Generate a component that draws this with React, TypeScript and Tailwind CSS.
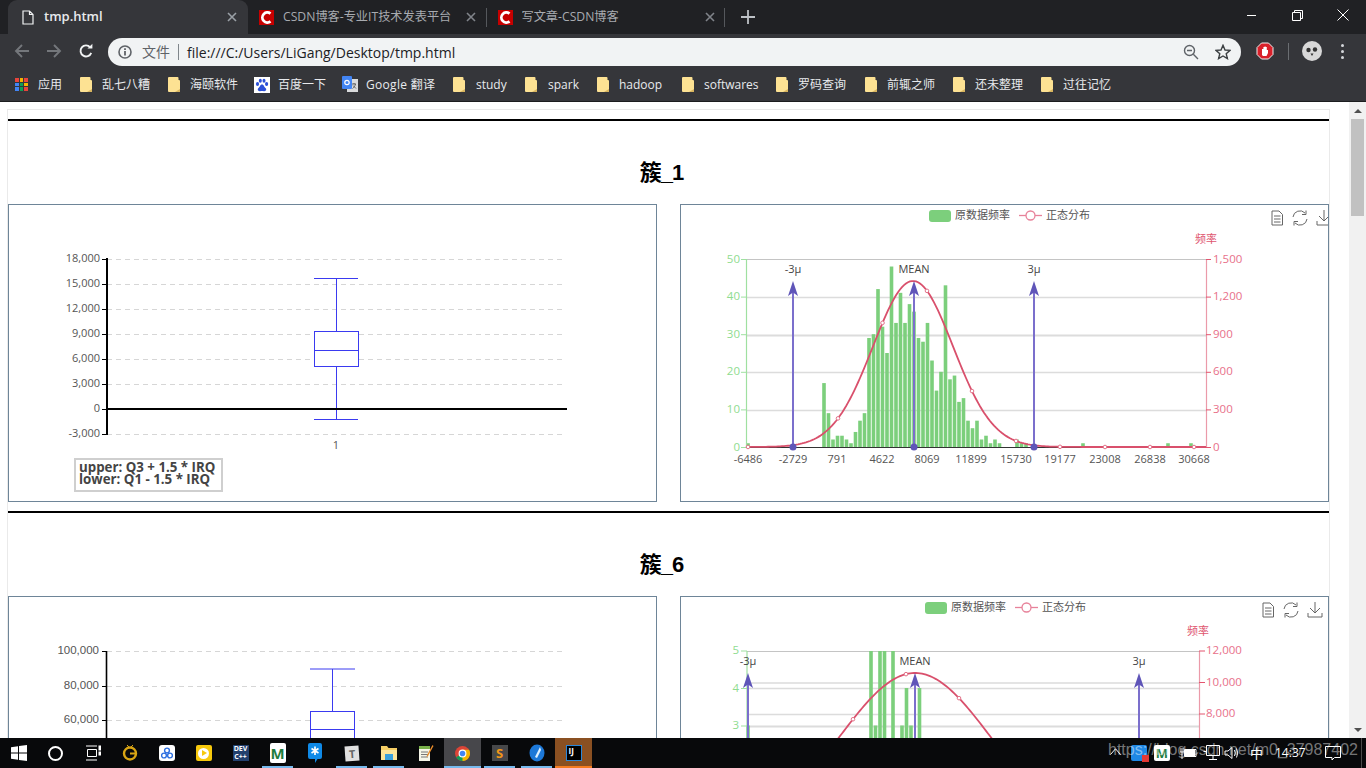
import React from "react";

const UI = "font-['Open_Sans','Noto_Sans_CJK_SC',sans-serif]";

function Cs() {
  return (
    <svg width="15" height="15" viewBox="0 0 15 15" className="flex-none">
      <rect width="15" height="15" fill="#c60000" />
      <path d="M11.5 3.6 A5 5 0 1 0 11.5 11.4" fill="none" stroke="#fff" strokeWidth="2.8" />
    </svg>
  );
}

function X({ c = "#9aa0a6" }: { c?: string }) {
  return (
    <svg width="10" height="10" viewBox="0 0 10 10" className="flex-none">
      <path d="M1 1 L9 9 M9 1 L1 9" stroke={c} strokeWidth="1.6" />
    </svg>
  );
}

function Tab({ title }: { title: string }) {
  return (
    <div className="w-[238.5px] h-[34px] flex items-center flex-none relative">
      <div className="ml-[11px] mr-[9px]"><Cs /></div>
      <span className="text-[12.2px] text-[#a8abb0] w-[183px] truncate whitespace-nowrap">{title}</span>
      <X c="#80848a" />
      <div className="absolute right-0 top-[8px] w-px h-[19px] bg-[#55585c]" />
    </div>
  );
}

function TopBar() {
  return (
    <div className="h-[34px] bg-[#202124] flex items-end flex-none relative pl-[8px]">
      <div className="w-[240px] h-[34px] bg-[#35363a] rounded-t-[9px] flex items-center flex-none">
        <svg width="12" height="15" viewBox="0 0 12 15" className="ml-[14px] mr-[10px]">
          <path d="M1 1 H7.5 L11 4.5 V14 H1 Z M7.5 1 V4.5 H11" fill="none" stroke="#f1f3f4" strokeWidth="1.2" />
        </svg>
        <span className="text-[13px] font-semibold text-[#e8eaed] w-[183px]">tmp.html</span>
        <X />
      </div>
      <Tab title="CSDN博客-专业IT技术发表平台" />
      <Tab title="写文章-CSDN博客" />
      <svg width="14" height="14" viewBox="0 0 14 14" className="ml-[16px] mb-[10px] flex-none">
        <path d="M7 0 V14 M0 7 H14" stroke="#bdc1c6" strokeWidth="1.8" />
      </svg>
      <div className="absolute right-0 top-0 h-[34px] flex items-center">
        <div className="w-[46px] flex justify-center"><div className="w-[9px] h-px bg-white mb-[4px]" /></div>
        <div className="w-[46px] flex justify-center">
          <svg width="11" height="11" viewBox="0 0 11 11" className="mb-[4px]">
            <path d="M0.5 2.5 H8.5 V10.5 H0.5 Z M2.5 2.5 V0.5 H10.5 V8.5 H8.5" fill="none" stroke="#fff" />
          </svg>
        </div>
        <div className="w-[46px] flex justify-center">
          <svg width="12" height="12" viewBox="0 0 12 12" className="mb-[4px]">
            <path d="M0.5 0.5 L11.5 11.5 M11.5 0.5 L0.5 11.5" stroke="#fff" />
          </svg>
        </div>
      </div>
    </div>
  );
}

function ToolBar() {
  return (
    <div className="h-[34px] bg-[#35363a] flex items-center flex-none pl-[14px]">
      <svg width="16" height="16" viewBox="0 0 16 16" className="flex-none">
        <path d="M15 8 H2 M8 2 L2 8 L8 14" fill="none" stroke="#74777b" strokeWidth="1.9" />
      </svg>
      <svg width="16" height="16" viewBox="0 0 16 16" className="ml-[16px] flex-none">
        <path d="M1 8 H14 M8 2 L14 8 L8 14" fill="none" stroke="#74777b" strokeWidth="1.9" />
      </svg>
      <svg width="16" height="16" viewBox="0 0 16 16" className="ml-[16px] flex-none">
        <path d="M13.2 9.8 A5.5 5.5 0 1 1 12.2 4.3" fill="none" stroke="#f1f3f4" strokeWidth="1.9" />
        <path d="M9.5 5.6 H14.4 V0.8 Z" fill="#f1f3f4" />
      </svg>
      <div className="ml-[14px] w-[1133px] h-[28px] rounded-full bg-[#f1f3f4] flex items-center flex-none mt-[2px]">
        <svg width="14" height="14" viewBox="0 0 14 14" className="ml-[10px] flex-none">
          <circle cx="7" cy="7" r="6" fill="none" stroke="#5f6368" strokeWidth="1.6" />
          <path d="M7 6 V10.5 M7 3.2 V5" stroke="#5f6368" strokeWidth="1.8" />
        </svg>
        <span className="ml-[10px] text-[14px] leading-none text-[#5f6368] whitespace-nowrap">文件</span>
        <div className="w-px h-[16px] bg-[#80868b] ml-[8px]" />
        <span className="ml-[8px] text-[14px] text-[#202124] whitespace-nowrap">file:///C:/Users/LiGang/Desktop/tmp.html</span>
        <svg width="16" height="16" viewBox="0 0 16 16" className="ml-auto flex-none">
          <circle cx="6.5" cy="6.5" r="5" fill="none" stroke="#5f6368" strokeWidth="1.4" />
          <path d="M10.3 10.3 L15 15 M4 6.5 H9" stroke="#5f6368" strokeWidth="1.4" />
        </svg>
        <svg width="16" height="16" viewBox="0 0 16 16" className="ml-[16px] mr-[10px] flex-none">
          <path d="M8 1.3 L10 6 L15 6.4 L11.2 9.7 L12.4 14.6 L8 12 L3.6 14.6 L4.8 9.7 L1 6.4 L6 6 Z" fill="none" stroke="#3c4043" strokeWidth="1.4" />
        </svg>
      </div>
      <svg width="18" height="18" viewBox="0 0 18 18" className="ml-[15px] flex-none">
        <path d="M5.5 1 H12.5 L17 5.5 V12.5 L12.5 17 H5.5 L1 12.5 V5.5 Z" fill="#d8202a" stroke="#eee" />
        <path d="M6 13 V7 H7.4 V5 H8.5 V7 V4.5 H9.7 V7 V5 H10.8 V8 H12 V11 L10.5 14 H7 Z" fill="#fff" />
      </svg>
      <div className="w-px h-[17px] bg-[#6b6e72] ml-[14px] flex-none" />
      <div className="w-[20px] h-[20px] rounded-full bg-[#d8d8d8] ml-[13px] flex-none flex items-center justify-center">
        <svg width="20" height="20" viewBox="0 0 20 20">
          <circle cx="6.5" cy="9" r="2.2" fill="#333" />
          <circle cx="13" cy="8.5" r="2.2" fill="#333" />
          <path d="M10 15 L8.5 12.5 H11.5 Z" fill="#333" />
        </svg>
      </div>
      <div className="ml-[19px] flex flex-col gap-[3px] flex-none">
        <div className="w-[3px] h-[3px] rounded-full bg-[#d5d7da]" />
        <div className="w-[3px] h-[3px] rounded-full bg-[#d5d7da]" />
        <div className="w-[3px] h-[3px] rounded-full bg-[#d5d7da]" />
      </div>
    </div>
  );
}

function Folder() {
  return (
    <svg width="12" height="15" viewBox="0 0 12 15" className="flex-none">
      <path d="M0 1 Q0 0 1 0 H9.5 Q10.5 0 10.5 1 V3 H11 Q12 3 12 4 V14 Q12 15 11 15 H1 Q0 15 0 14 Z" fill="#fde293" />
      <path d="M7 15 L12 12 V15 Z" fill="#d8b55f" />
    </svg>
  );
}

function Apps() {
  const cs = ["#e8453c", "#f4b400", "#e8453c", "#4285f4", "#0f9d58", "#f4b400", "#4285f4", "#0f9d58", "#e8453c"];
  return (
    <div className="grid grid-cols-3 gap-[1px] w-[13px] flex-none">
      {cs.map((c, i) => (
        <div key={i} className="w-[3.6px] h-[3.6px]" style={{ background: c }} />
      ))}
    </div>
  );
}

function Baidu() {
  return (
    <svg width="16" height="16" viewBox="0 0 16 16" className="flex-none">
      <rect width="16" height="16" fill="#fff" />
      <g fill="#2b50d8">
        <ellipse cx="3.5" cy="7" rx="1.6" ry="2" />
        <ellipse cx="6.3" cy="3.8" rx="1.5" ry="2" />
        <ellipse cx="10" cy="3.8" rx="1.5" ry="2" />
        <ellipse cx="12.6" cy="7" rx="1.6" ry="2" />
        <path d="M8 7.5 C6 7.5 6 10 4.5 11 C3 12 4 14.5 6 14.2 C7.5 14 8.5 14 10 14.2 C12 14.5 13 12 11.5 11 C10 10 10 7.5 8 7.5 Z" />
      </g>
    </svg>
  );
}

function Translate() {
  return (
    <svg width="16" height="17" viewBox="0 0 16 17" className="flex-none">
      <rect x="5" y="3" width="11" height="13" fill="#d9dadb" />
      <rect width="10" height="13" rx="1" fill="#4285f4" />
      <circle cx="5" cy="6.5" r="2.2" fill="none" stroke="#fff" strokeWidth="1.2" />
      <path d="M10 8 L14 8 M12 7 V8 M13.5 8 C13 10 12 11.5 10.5 12.5 M11 9.5 L14 12.5" stroke="#555" strokeWidth="0.9" fill="none" />
    </svg>
  );
}

type Bm = { k: "a" | "f" | "b" | "t"; t: string; w: string; ts?: string };
const bms: Bm[] = [
  { k: "a", t: "应用", w: "w-[65px]", ts: "ml-[10px]" },
  { k: "f", t: "乱七八糟", w: "w-[88px]", ts: "ml-[10px]" },
  { k: "f", t: "海颐软件", w: "w-[86px]", ts: "ml-[10px]" },
  { k: "b", t: "百度一下", w: "w-[88px]", ts: "ml-[8px]" },
  { k: "t", t: "Google 翻译", w: "w-[111px]", ts: "ml-[8px] tracking-[0.3px]" },
  { k: "f", t: "study", w: "w-[72px]", ts: "ml-[11px]" },
  { k: "f", t: "spark", w: "w-[72px]", ts: "ml-[11px]" },
  { k: "f", t: "hadoop", w: "w-[85px]", ts: "ml-[10px]" },
  { k: "f", t: "softwares", w: "w-[94px]", ts: "ml-[10px]" },
  { k: "f", t: "罗码查询", w: "w-[89px]", ts: "ml-[10px]" },
  { k: "f", t: "前辄之师", w: "w-[88px]", ts: "ml-[10px]" },
  { k: "f", t: "还未整理", w: "w-[88px]", ts: "ml-[10px]" },
  { k: "f", t: "过往记忆", w: "w-[88px]", ts: "ml-[10px]" },
];

function Bookmarks() {
  return (
    <div className="h-[34px] bg-[#35363a] border-b border-[#1c1d1f] flex items-center flex-none pl-[15px]">
      {bms.map((b) => (
        <div key={b.t} className={"flex items-center flex-none " + b.w}>
          {b.k === "a" && <Apps />}
          {b.k === "f" && <Folder />}
          {b.k === "b" && <Baidu />}
          {b.k === "t" && <Translate />}
          <span className={"text-[12px] text-[#e8eaed] whitespace-nowrap " + b.ts}>{b.t}</span>
        </div>
      ))}
    </div>
  );
}

const bars1: [number, number][] = [
  [748, 1], [824, 17], [828.5, 9], [833, 2], [837.5, 3], [842, 3], [846.5, 2], [851, 1], [855.5, 4], [860, 7], [864.5, 9],
  [869, 29], [873.5, 30], [878, 42], [882.5, 32], [887, 25], [891.5, 48], [896, 33], [900.5, 41], [905, 33], [909.5, 38], [914, 36],
  [918.5, 29], [923, 28], [927.5, 33], [932, 23], [936.5, 15], [941, 20], [945.5, 43], [950, 18], [954.5, 19], [959, 12], [963.5, 13],
  [968, 7], [972.5, 5], [977, 7], [981.5, 2], [986, 3], [990.5, 1], [995, 2], [999.5, 1], [1017, 2], [1021.5, 1], [1026, 1], [1083, 1], [1168, 1], [1191, 1],
];
const bars2: [number, number][] = [
  [748, 3], [871, 5], [875.5, 3], [880, 5], [884.5, 5], [893, 5], [902, 3], [906.5, 4], [911, 3], [919.5, 4],
];

function curve(cx: number, sigma: number, base: number, h: number, x0: number, x1: number) {
  let d = "";
  for (let x = x0; x <= x1; x += 2) {
    const y = base - h * Math.exp(-((x - cx) * (x - cx)) / (2 * sigma * sigma));
    d += (d ? " L" : "M") + x + " " + y.toFixed(2);
  }
  return d;
}

function Arrow({ x, base, tip, label, ly, dot }: { x: number; base: number; tip: number; label: string; ly: number; dot?: boolean }) {
  return (
    <g>
      <line x1={x} x2={x} y1={base} y2={tip + 8} stroke="#7b6fcc" strokeWidth="2" />
      <path d={`M${x} ${tip} L${x + 5} ${tip + 15} L${x} ${tip + 11.5} L${x - 5} ${tip + 15} Z`} fill="#5f55b8" />
      {dot && <circle cx={x} cy={base} r="3.5" fill="#5f55b8" />}
      <text x={x} y={ly} textAnchor="middle" fontSize="11" fill="#444">{label}</text>
    </g>
  );
}

function ToolIcons({ xs, y }: { xs: number[]; y: number }) {
  return (
    <g fill="none" stroke="#666" strokeWidth="1">
      <path d={`M${xs[0] - 5} ${y - 7} H${xs[0] + 2} L${xs[0] + 5.5} ${y - 3.5} V${y + 7} H${xs[0] - 5} Z M${xs[0] - 3} ${y - 2} H${xs[0] + 3.5} M${xs[0] - 3} ${y + 1} H${xs[0] + 3.5} M${xs[0] - 3} ${y + 4} H${xs[0] + 3.5}`} />
      <path d={`M${xs[1] - 7} ${y - 1} A7 7 0 0 1 ${xs[1] + 5} ${y - 5} M${xs[1] + 7} ${y + 1} A7 7 0 0 1 ${xs[1] - 5} ${y + 5} M${xs[1] + 6} ${y - 7.5} V${y - 3.5} H${xs[1] + 2} M${xs[1] - 6} ${y + 7.5} V${y + 3.5} H${xs[1] - 2}`} />
      <path d={`M${xs[2]} ${y - 8} V${y + 3} M${xs[2] - 5} ${y - 2} L${xs[2]} ${y + 3} L${xs[2] + 5} ${y - 2} M${xs[2] - 7} ${y + 3} V${y + 7} H${xs[2] + 7} V${y + 3}`} />
    </g>
  );
}

function Chart1() {
  const base = 447;
  return (
    <svg width="647" height="296" viewBox="681 205 647 296" className={"block " + UI}>
      {[297, 335, 372, 410].map((y) => (
        <line key={y} x1="746" x2="1206" y1={y + 0.5} y2={y + 0.5} stroke="#dcdcdc" strokeWidth={y === 335 ? 2 : 1.3} />
      ))}
      <line x1="746" x2="1206" y1="259.5" y2="259.5" stroke="#c4c4c4" />
      {bars1.map(([x, v]) => (
        <rect key={x} x={x - 1.8} y={base - v * 3.76} width="3.6" height={v * 3.76} fill="#7ccf7c" />
      ))}
      <line x1="746.5" x2="746.5" y1="259" y2="447" stroke="#9fe0a0" strokeWidth="1.2" />
      <line x1="1206.5" x2="1206.5" y1="259" y2="447" stroke="#eb9aa9" strokeWidth="1.2" />
      {[50, 40, 30, 20, 10, 0].map((t, i) => (
        <g key={t}>
          <line x1="741" x2="746" y1={259.5 + i * 37.6} y2={259.5 + i * 37.6} stroke="#9fe0a0" />
          <text x="740" y={262.5 + i * 37.6} textAnchor="end" fontSize="11.5" fill="#8fdc90">{t}</text>
        </g>
      ))}
      {["1,500", "1,200", "900", "600", "300", "0"].map((t, i) => (
        <g key={t}>
          <line x1="1206" x2="1211" y1={259.5 + i * 37.6} y2={259.5 + i * 37.6} stroke="#e3556f" />
          <text x="1213" y={262.5 + i * 37.6} fontSize="11.5" fill="#e8708a">{t}</text>
        </g>
      ))}
      <text x="1206" y="243" textAnchor="middle" fontSize="11" fill="#e0566f">频率</text>
      <line x1="746" x2="1206" y1="447.5" y2="447.5" stroke="#333" />
      {[["-6486", 748], ["-2729", 793], ["791", 837], ["4622", 882], ["8069", 927], ["11899", 971], ["15730", 1016], ["19177", 1060], ["23008", 1105], ["26838", 1150], ["30668", 1194]].map(([t, x]) => (
        <text key={t as string} x={x as number} y="463" textAnchor="middle" fontSize="11" fill="#555">{t}</text>
      ))}
      <path d={curve(913, 40, base, 166, 748, 1206)} fill="none" stroke="#d9506c" strokeWidth="1.8" />
      {[748, 838, 882.5, 927, 972, 1016, 1060, 1105, 1150, 1194].map((x) => (
        <circle key={x} cx={x} cy={base - 166 * Math.exp(-((x - 913) * (x - 913)) / 3200)} r="1.8" fill="#fff" stroke="#e3738a" />
      ))}
      <Arrow x={793} base={447} tip={281} label="-3μ" ly={273} dot />
      <Arrow x={914} base={447} tip={281} label="MEAN" ly={273} dot />
      <Arrow x={1034} base={447} tip={281} label="3μ" ly={273} dot />
      <rect x="929" y="210" width="22" height="12" rx="3" fill="#7ccf7c" />
      <text x="955" y="219" fontSize="11" fill="#555">原数据频率</text>
      <line x1="1019" x2="1042" y1="215.5" y2="215.5" stroke="#e7829a" strokeWidth="1.3" />
      <circle cx="1030.5" cy="215.5" r="4.5" fill="#fff" stroke="#e7829a" strokeWidth="1.3" />
      <text x="1046" y="219" fontSize="11" fill="#555">正态分布</text>
      <ToolIcons xs={[1277, 1300, 1324]} y={218} />
    </svg>
  );
}

function Chart2() {
  const base = 840;
  return (
    <svg width="647" height="296" viewBox="681 597 647 296" className={"block " + UI}>
      {[688, 714, 726, 745].map((y) => (
        <line key={y} x1="747" x2="1199" y1={y + 0.5} y2={y + 0.5} stroke="#dcdcdc" strokeWidth={y === 726 ? 2 : 1.3} />
      ))}
      <line x1="747" x2="1199" y1="683" y2="683" stroke="#e4e4e4" strokeWidth="2" />
      <line x1="747" x2="1199" y1="651.5" y2="651.5" stroke="#c4c4c4" />
      {bars2.map(([x, v]) => (
        <rect key={x} x={x - 1.8} y={Math.max(651, 838 - v * 37.5)} width="3.6" height="220" fill="#7ccf7c" />
      ))}
      <line x1="747" x2="747" y1="651" y2="840" stroke="#9fe0a0" strokeWidth="1.2" />
      <line x1="1199.5" x2="1199.5" y1="651" y2="840" stroke="#eb9aa9" strokeWidth="1.2" />
      {[5, 4, 3].map((t, i) => (
        <g key={t}>
          <line x1="741" x2="747" y1={651 + i * 37.5} y2={651 + i * 37.5} stroke="#9fe0a0" />
          <text x="739" y={654 + i * 37.5} textAnchor="end" fontSize="11.5" fill="#8fdc90">{t}</text>
        </g>
      ))}
      {["12,000", "10,000", "8,000"].map((t, i) => (
        <g key={t}>
          <line x1="1199" x2="1205" y1={651 + i * 31.5} y2={651 + i * 31.5} stroke="#e3556f" />
          <text x="1206" y={654 + i * 31.5} fontSize="11.5" fill="#e8708a">{t}</text>
        </g>
      ))}
      <text x="1198" y="635" textAnchor="middle" fontSize="11" fill="#e0566f">频率</text>
      <path d={curve(915, 77, base, 167, 760, 1100)} fill="none" stroke="#d9506c" strokeWidth="1.8" />
      {[853, 906, 959].map((x) => (
        <circle key={x} cx={x} cy={base - 167 * Math.exp(-((x - 915) * (x - 915)) / (2 * 77 * 77))} r="1.8" fill="#fff" stroke="#e3738a" />
      ))}
      <Arrow x={748} base={840} tip={673} label="-3μ" ly={665} />
      <Arrow x={915} base={840} tip={673} label="MEAN" ly={665} />
      <Arrow x={1139} base={840} tip={673} label="3μ" ly={665} />
      <rect x="925" y="602" width="22" height="12" rx="3" fill="#7ccf7c" />
      <text x="951" y="611" fontSize="11" fill="#555">原数据频率</text>
      <line x1="1015" x2="1038" y1="607.5" y2="607.5" stroke="#e7829a" strokeWidth="1.3" />
      <circle cx="1026.5" cy="607.5" r="4.5" fill="#fff" stroke="#e7829a" strokeWidth="1.3" />
      <text x="1042" y="611" fontSize="11" fill="#555">正态分布</text>
      <ToolIcons xs={[1268, 1291, 1315]} y={610} />
    </svg>
  );
}

function Panel({ children }: { children: React.ReactNode }) {
  return <div className="w-[649px] h-[298px] border border-[#6e8598] relative flex-none overflow-hidden">{children}</div>;
}

function Section({ title, left, right }: { title: string; left: React.ReactNode; right: React.ReactNode }) {
  return (
    <section>
      <div className="h-[2px] bg-black" />
      <div className="h-[83px] pt-[19px] pr-[14px] flex items-center justify-center">
        <h2 className="text-[22px] font-bold tracking-[-1px] text-black font-['Liberation_Sans','Noto_Sans_CJK_SC',sans-serif]">{title}</h2>
      </div>
      <div className="flex justify-between">
        {left}
        {right}
      </div>
      <div className="h-[9px]" />
    </section>
  );
}

function Page() {
  return (
    <div className="flex-1 min-w-0 overflow-hidden pt-[7px] pl-[7px]">
      <div className="w-[1323px] border border-[#eaeaea] pt-[9px]">
        <Section
          title="簇_1"
          left={
            <Panel>
              <svg width="647" height="296" viewBox="9 205 647 296" className={"block " + UI}>
                {[["18,000", 259], ["15,000", 284], ["12,000", 309], ["9,000", 334], ["6,000", 359], ["3,000", 384], ["0", 409], ["-3,000", 434]].map(([t, y]) => (
                  <g key={t as string}>
                    <line x1="107" x2="566" y1={(y as number) + 0.5} y2={(y as number) + 0.5} stroke="#d6d6d6" strokeDasharray="5 4" />
                    <line x1="102" x2="107" y1={(y as number) + 0.5} y2={(y as number) + 0.5} stroke="#000" />
                    <text x="100" y={(y as number) + 3} textAnchor="end" fontSize="11" fill="#555">{t}</text>
                  </g>
                ))}
                <line x1="107" x2="107" y1="258" y2="435" stroke="#000" strokeWidth="2" />
                <g stroke="#3a3af0" fill="none">
                  <line x1="314" x2="358" y1="278.5" y2="278.5" />
                  <line x1="336.5" x2="336.5" y1="278" y2="331" />
                  <rect x="314.5" y="331.5" width="44" height="35" fill="#fff" />
                  <line x1="314" x2="358" y1="350.5" y2="350.5" />
                  <line x1="336.5" x2="336.5" y1="367" y2="420" />
                  <line x1="314" x2="358" y1="419.5" y2="419.5" />
                </g>
                <line x1="107" x2="567" y1="409" y2="409" stroke="#000" strokeWidth="2" />
                <text x="336" y="449" textAnchor="middle" fontSize="11" fill="#555">1</text>
              </svg>
              <div className={"absolute left-[65px] top-[253px] w-[149px] h-[34px] border-2 border-[#cfcfcf] bg-white pl-[3px] text-[13.3px] leading-[12px] pt-[1px] font-bold text-[#444] whitespace-nowrap " + UI}>
                <div>upper: Q3 + 1.5 * IRQ</div>
                <div>lower: Q1 - 1.5 * IRQ</div>
              </div>
            </Panel>
          }
          right={
            <Panel>
              <Chart1 />
            </Panel>
          }
        />
        <Section
          title="簇_6"
          left={
            <Panel>
              <svg width="647" height="296" viewBox="9 597 647 296" className="block font-['Liberation_Sans',sans-serif]">
                {[["100,000", 651], ["80,000", 686], ["60,000", 720]].map(([t, y]) => (
                  <g key={t as string}>
                    <line x1="107" x2="566" y1={(y as number) + 0.5} y2={(y as number) + 0.5} stroke="#d6d6d6" strokeDasharray="5 4" />
                    <line x1="102" x2="107" y1={(y as number) + 0.5} y2={(y as number) + 0.5} stroke="#000" />
                    <text x="99" y={(y as number) + 3} textAnchor="end" fontSize="11.5" fill="#555">{t}</text>
                  </g>
                ))}
                <line x1="106.5" x2="106.5" y1="651" y2="800" stroke="#000" strokeWidth="1.6" />
                <g stroke="#3a3af0" fill="none">
                  <line x1="310" x2="355" y1="669" y2="669" />
                  <line x1="332.5" x2="332.5" y1="669" y2="712" />
                  <rect x="310.5" y="711.5" width="44" height="60" fill="#fff" />
                  <line x1="310" x2="355" y1="729.5" y2="729.5" />
                </g>
              </svg>
            </Panel>
          }
          right={
            <Panel>
              <Chart2 />
            </Panel>
          }
        />
      </div>
    </div>
  );
}

function Scrollbar() {
  return (
    <div className="w-[17px] bg-[#f1f1f1] flex-none flex flex-col items-center relative">
      <div className="h-[17px] flex items-center justify-center flex-none">
        <div className="w-0 h-0 border-x-[4px] border-x-transparent border-b-[4px] border-b-[#505050]" />
      </div>
      <div className="w-[13px] h-[97px] bg-[#c1c1c1] flex-none" />
      <div className="flex-1" />
      <div className="h-[17px] flex items-center justify-center flex-none">
        <div className="w-0 h-0 border-x-[4px] border-x-transparent border-t-[4px] border-t-[#505050]" />
      </div>
    </div>
  );
}

function TI({ children, cls = "", bar = "" }: { children: React.ReactNode; cls?: string; bar?: string }) {
  return (
    <div className={"w-[37px] h-[30px] flex items-center justify-center flex-none relative " + cls}>
      {children}
      {bar && <div className={"absolute bottom-0 h-[2px] " + bar} />}
    </div>
  );
}

function Taskbar() {
  const under = "bg-[#76b9ed] left-[3px] right-[3px]";
  return (
    <div className="h-[30px] bg-[#08090b] flex-none flex items-center relative overflow-hidden">
      <TI>
        <svg width="16" height="16" viewBox="0 0 16 16"><path d="M0 2.3 L7 1.3 V7.5 H0 Z M8 1.1 L16 0 V7.5 H8 Z M0 8.5 H7 V14.7 L0 13.7 Z M8 8.5 H16 V16 L8 14.9 Z" fill="#fff" /></svg>
      </TI>
      <TI>
        <div className="w-[15px] h-[15px] rounded-full border-2 border-white" />
      </TI>
      <TI>
        <svg width="16" height="16" viewBox="0 0 16 16" fill="none" stroke="#fff"><path d="M1 1 H12 M1 15 H12 M2.5 4.5 H11.5 V11.5 H2.5 Z" /><rect x="14" y="1" width="1.5" height="4" fill="#fff" /><rect x="14" y="7" width="1.5" height="3" fill="#fff" /></svg>
      </TI>
      <TI>
        <svg width="16" height="18" viewBox="0 0 16 18"><circle cx="8" cy="9.5" r="6" fill="none" stroke="#d9a514" strokeWidth="2.4" /><path d="M8 9.5 H13" stroke="#d9a514" strokeWidth="2" /><path d="M5 1 L8 4 L11 1" stroke="#d9a514" fill="none" /></svg>
      </TI>
      <TI>
        <div className="w-[16px] h-[16px] rounded-[3px] bg-white flex items-center justify-center">
          <svg width="12" height="12" viewBox="0 0 12 12" fill="none" stroke="#2d6fe0" strokeWidth="1.4"><circle cx="6" cy="3.5" r="2.4" /><circle cx="3" cy="8.5" r="2.4" /><circle cx="9" cy="8.5" r="2.4" /></svg>
        </div>
      </TI>
      <TI>
        <div className="w-[16px] h-[16px] rounded-[2px] bg-[#f7c90d] flex items-center justify-center">
          <div className="w-[11px] h-[11px] rounded-full bg-white flex items-center justify-center">
            <div className="w-0 h-0 ml-[1px] border-y-[3px] border-y-transparent border-l-[5px] border-l-[#f7c90d]" />
          </div>
        </div>
      </TI>
      <TI>
        <div className={"w-[16px] h-[16px] bg-[#22406e] text-[7px] leading-[8px] font-bold text-white text-center " + UI}>DEV<br />C++</div>
      </TI>
      <TI bar={under}>
        <div className={"w-[16px] h-[20px] rounded-[2px] bg-white text-[15px] leading-[20px] font-bold text-[#1e7d3e] text-center " + UI}>M</div>
      </TI>
      <TI>
        <svg width="14" height="20" viewBox="0 0 14 20"><path d="M2 0 H12 Q14 0 14 2 V14 Q14 16 12 16 H9.5 L7 20 V16 H2 Q0 16 0 14 V2 Q0 0 2 0 Z" fill="#0f8ae8" /><path d="M7 3.5 V12 M3.5 5.5 L10.5 10 M10.5 5.5 L3.5 10" stroke="#fff" strokeWidth="1.7" /></svg>
      </TI>
      <TI bar={under}>
        <div className={"w-[14px] h-[15px] bg-[#e0e0e0] rotate-[-4deg] text-[11px] leading-[15px] font-bold text-[#666] text-center " + UI}>T</div>
      </TI>
      <TI bar={under}>
        <svg width="16" height="16" viewBox="0 0 16 16"><path d="M0 1 H6 L7.5 3 H16 V15 H0 Z" fill="#f6cf66" /><rect y="5" width="16" height="10" fill="#fde59a" /><rect x="4" y="9" width="8" height="6" fill="#3aa0dc" /></svg>
      </TI>
      <TI>
        <svg width="16" height="18" viewBox="0 0 16 18"><rect x="1" y="2" width="11" height="15" fill="#f5f5e8" /><rect x="1" y="2" width="11" height="3" fill="#78b04a" /><path d="M3 8 H10 M3 10.5 H10 M3 13 H10" stroke="#777" /><path d="M14.5 1 L9 11 L8.5 13 L10 12 L15.5 2 Z" fill="#e88b2a" /></svg>
      </TI>
      <TI cls="bg-[#47474b]" bar="bg-[#76b9ed] left-0 right-0">
        <svg width="15" height="15" viewBox="0 0 24 24">
          <circle cx="12" cy="12" r="12" fill="#db4437" />
          <path d="M12 12 L1.6 18 A12 12 0 0 0 16 23.3 Z" fill="#0f9d58" />
          <path d="M12 6 H22.4 A12 12 0 0 1 12 24 Z" fill="#f4b400" />
          <circle cx="12" cy="12" r="5.4" fill="#4285f4" stroke="#fff" strokeWidth="1.8" />
        </svg>
      </TI>
      <TI bar={under}>
        <div className={"w-[16px] h-[16px] bg-[#47484a] text-[13px] leading-[16px] font-bold text-[#f19618] text-center " + UI}>S</div>
      </TI>
      <TI bar={under}>
        <svg width="16" height="18" viewBox="0 0 16 18"><ellipse cx="8" cy="9" rx="7.5" ry="8.5" fill="#1c78d8" /><path d="M11 3 L6 13 L8 14 L12 6 Z" fill="#dff1ff" /></svg>
      </TI>
      <TI cls="bg-[#8a5022]" bar="bg-[#f47b20] left-0 right-0">
        <div className={"w-[16px] h-[16px] bg-black border border-[#2b87d8] text-[8px] leading-[10px] font-bold text-white pl-[2px] " + UI}>IJ</div>
      </TI>

      <div className="absolute right-0 top-0 h-[30px] w-[262px]">
        <div className="absolute left-[6px] top-[10px]">
          <svg width="11" height="7" viewBox="0 0 11 7"><path d="M0.5 6.5 L5.5 0.8 L10.5 6.5" fill="none" stroke="#fff" /></svg>
        </div>
        <div className="absolute left-[27px] top-[7px] w-[16px] h-[16px] rounded-[2px] bg-[#1e88e5]">
          <div className="absolute right-[-2px] bottom-[-1px] w-[7px] h-[7px] bg-[#e53935]" />
        </div>
        <div className={"absolute left-[50px] top-[7px] w-[16px] h-[16px] rounded-[2px] bg-white text-[13px] leading-[16px] font-bold text-[#1e7d3e] text-center " + UI}>M</div>
        <div className="absolute left-[75px] top-[9px]">
          <svg width="18" height="13" viewBox="0 0 18 13" fill="none" stroke="#fff"><path d="M5.5 2.5 H17 V9.5 H5.5 Z M2 1 V5 M4 1 V5 M1 5 H5 M3 5 V12" /><rect x="6.5" y="3.5" width="9" height="5" fill="#fff" /></svg>
        </div>
        <div className="absolute left-[99px] top-[7px]">
          <svg width="17" height="16" viewBox="0 0 17 16" fill="none" stroke="#fff"><path d="M3.5 0.5 H16.5 V10.5 H3.5 Z M10 10.5 V14 M6 14.5 H14 M0.5 6.5 H3.5" /></svg>
        </div>
        <div className="absolute left-[120px] top-[8px]">
          <svg width="15" height="14" viewBox="0 0 15 14" fill="none" stroke="#fff"><path d="M1 5 H4 L8 1.5 V12.5 L4 9 H1 Z M10.5 4 Q12 7 10.5 10 M12.5 2.5 Q15 7 12.5 11.5" /></svg>
        </div>
        <div className={"absolute left-[146px] top-[6px] text-[13px] text-white leading-[18px] " + UI}>中</div>
        <div className={"absolute left-[171px] top-[6px] text-[12px] text-white leading-[18px] " + UI}>14:37</div>
        <div className="absolute left-[221px] top-[8px]">
          <svg width="16" height="15" viewBox="0 0 16 15" fill="none" stroke="#fff"><path d="M0.5 0.5 H15.5 V11.5 H9.5 L7 14 V11.5 H0.5 Z" /></svg>
        </div>
        <div className="absolute left-[257px] top-0 w-px h-[30px] bg-[#4a4a4a]" />
        <div className="absolute left-[4px] top-0 text-[16px] leading-[24px] text-white/45 whitespace-nowrap font-['Liberation_Sans',sans-serif]">https://blog.csdn.net/m0_37987402</div>
      </div>
    </div>
  );
}

export default function App() {
  return (
    <div className={"w-[1366px] h-[768px] overflow-hidden flex flex-col bg-white " + UI}>
      <TopBar />
      <ToolBar />
      <Bookmarks />
      <div className="flex flex-1 min-h-0 overflow-hidden bg-white">
        <Page />
        <Scrollbar />
      </div>
      <Taskbar />
    </div>
  );
}
